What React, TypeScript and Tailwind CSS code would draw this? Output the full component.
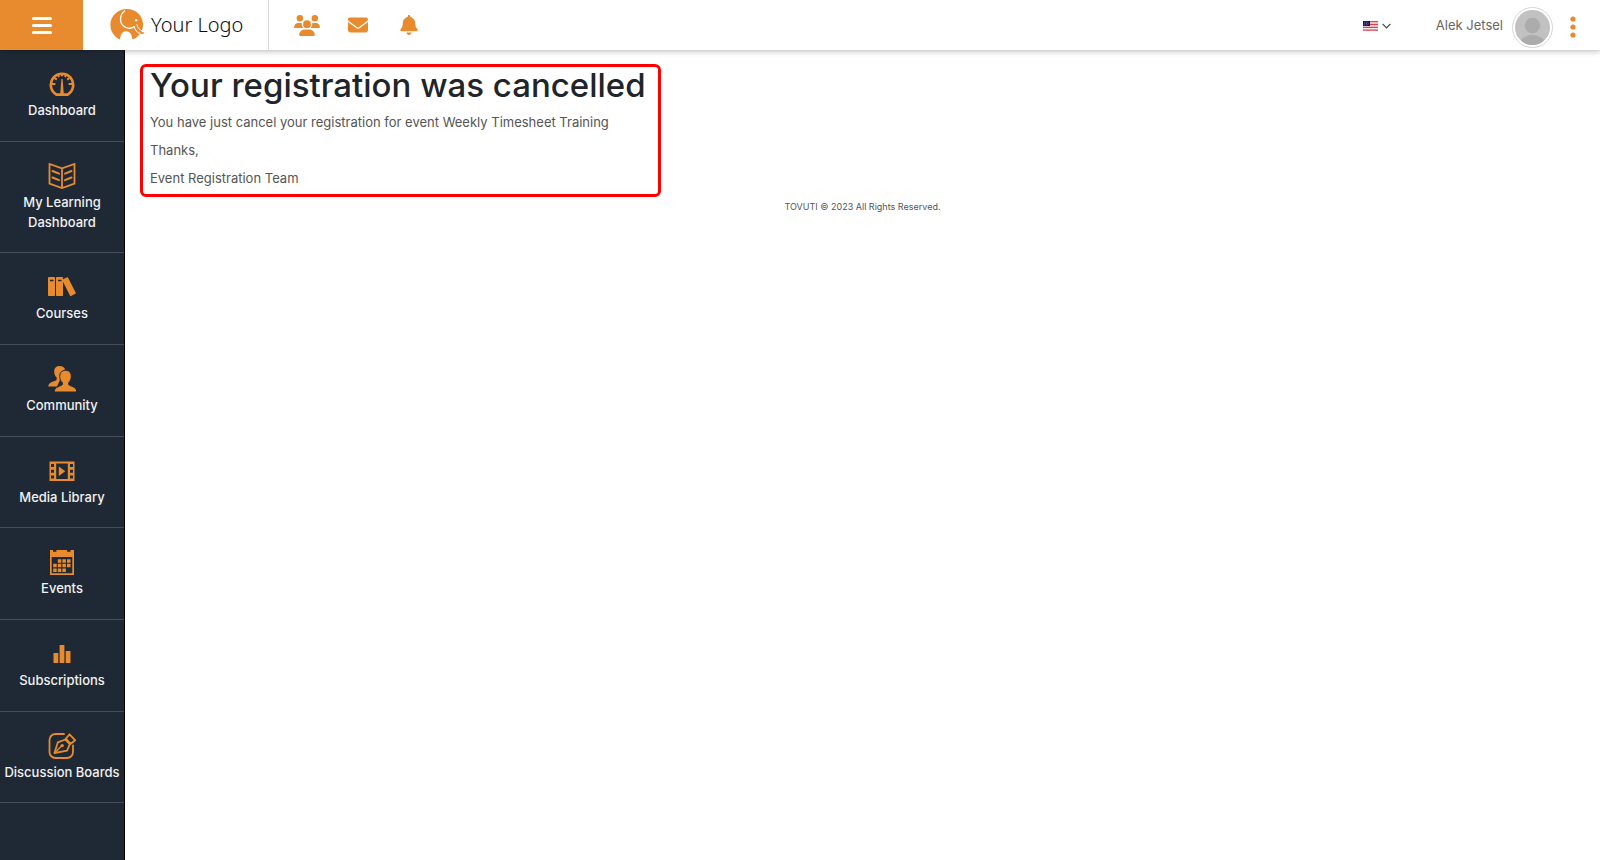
import React from 'react';
import { FaBell, FaEnvelope, FaUsers } from 'react-icons/fa6';

const DashboardIcon = () => (
  <svg viewBox="0 0 26 26" className="h-[26px] w-[26px]" fill="none" stroke="currentColor" aria-hidden="true">
    <path d="M7.400 23.600a11.200 11.200 0 1 1 11.200 0z" strokeWidth="2.600" strokeLinejoin="round" />
    <path
      d="M3 13h3.400M19.600 13H23M5.500 7l2.300 1.600M20.500 7l-2.300 1.600M9 3.600l1 2.400M17 3.600L16 6M13 2.500v2.800"
      strokeWidth="2"
    />
    <path d="M12.400 8h1.200l1.200 15h-3.600z" fill="currentColor" stroke="none" />
  </svg>
);

const BookIcon = () => (
  <svg viewBox="0 0 28 26" className="h-[26px] w-[28px]" fill="none" stroke="currentColor" aria-hidden="true">
    <path d="M14 5.4L1.5 1v19.6L14 25l12.500-4.400V1zM14 5.400V25" strokeWidth="1.800" />
    <path
      d="M4.500 8l6.500 2.600M4.500 14.500l6.500 2.600M23.500 8L17 10.600M23.500 14.500L17 17.100"
      strokeWidth="2"
      strokeLinecap="round"
    />
  </svg>
);

const CoursesIcon = () => (
  <svg viewBox="0 0 28 26" className="h-[26px] w-[28px]" fill="currentColor" aria-hidden="true">
    <rect x="0" y="3" width="7" height="19" rx="0.8" />
    <rect x="8" y="3" width="7" height="19" rx="0.8" />
    <rect x="18" y="3.500" width="6.400" height="18.500" rx="0.8" transform="rotate(-27 21 13)" />
    <path d="M2 6.500h3.500M10 6.500h3.500" stroke="#1f2935" strokeWidth="1.300" />
  </svg>
);

const CommunityIcon = () => (
  <svg viewBox="0 0 28 26" className="h-[26px] w-[28px]" fill="currentColor" aria-hidden="true">
    <path d="M11.500 0C8.200 0 6.200 2.200 6.200 5.500c0 2.600 1 4.800 2.500 6.100v2C8.500 15.500.3 15.500.3 20.500H9L17 3C16 1.100 14.200 0 11.500 0z" />
    <path
      d="M17.500 4.300c-3.600 0-5.800 2.400-5.800 6 0 2.700 1 5 2.600 6.300v1.900c-.5 1.700-8.100 1.700-8.100 7.500h22.600c0-5.800-7.600-5.800-8.100-7.500v-1.900c1.600-1.300 2.600-3.600 2.600-6.300 0-3.600-2.200-6-5.800-6z"
      stroke="#1f2935"
      strokeWidth="1"
    />
  </svg>
);

const MediaIcon = () => (
  <svg viewBox="0 0 26 26" className="h-[26px] w-[26px]" fill="currentColor" aria-hidden="true">
    <path
      fillRule="evenodd"
      d="M.5 3.500h25v19.500H.5zM2 6v3h3V6zm0 5.700v3h3v-3zm0 5.700v3h3v-3zM21 6v3h3V6zm0 5.700v3h3v-3zm0 5.700v3h3v-3zM7.200 5.500v15.500h11.600V5.500z"
    />
    <path d="M9.800 8.500v9.500l6.500-4.750z" />
  </svg>
);

const CalendarIcon = () => (
  <svg viewBox="0 0 26 26" className="h-[26px] w-[26px]" fill="currentColor" aria-hidden="true">
    <path fillRule="evenodd" d="M1 1h3v1.800h3.400V1h10.700v1.800h3.400V1H25v25H1zM2.700 8v16.300h20.600V8z" />
    <path d="M8.800 10.200h3.500v3.500H8.800zM13.400 10.200h3.500v3.500h-3.500zM18 10.200h3.500v3.500H18zM4.200 14.800h3.500v3.500H4.200zM8.800 14.800h3.500v3.500H8.800zM13.400 14.800h3.500v3.500h-3.500zM18 14.800h3.500v3.500H18zM4.200 19.400h3.500v3.500H4.200zM8.800 19.400h3.500v3.500H8.800zM13.400 19.400h3.500v3.500h-3.500z" />
  </svg>
);

const ChartIcon = () => (
  <svg viewBox="0 0 26 26" className="h-[26px] w-[26px]" fill="currentColor" aria-hidden="true">
    <rect x="4.500" y="12" width="4.800" height="10" rx="0.500" />
    <rect x="10.600" y="4" width="4.800" height="18" rx="0.500" />
    <rect x="16.700" y="10" width="4.800" height="12" rx="0.500" />
  </svg>
);

const PenIcon = () => (
  <svg
    viewBox="0 0 28 26"
    className="h-[26px] w-[28px]"
    fill="none"
    stroke="currentColor"
    strokeWidth="1.800"
    strokeLinejoin="round"
    strokeLinecap="round"
    aria-hidden="true"
  >
    <path d="M16 1H7.500A6 6 0 0 0 1.500 7v12a6 6 0 0 0 6 6H19a6 6 0 0 0 6-6v-6.500" />
    <path d="M6.500 20l3.300-10.700 7.400-2.800 4.600 4.600-2.700 6.500z" />
    <path d="M6.500 20l7-7" strokeWidth="1.400" />
    <circle cx="14.200" cy="12.600" r="1.700" fill="currentColor" stroke="none" />
    <path d="M17.800 5.600L21.600 1.300l5.600 6-4.500 3.500z" />
  </svg>
);

const ElephantLogo = () => (
  <svg viewBox="0 0 36 34" className="h-[34px] w-[36px]" aria-hidden="true">
    <path
      fill="#e78b2e"
      d="M16.800 1C7.600 1 .400 8.200.400 17c0 6.500 4 12.100 9.700 14.600.2-5.200 2.400-8.400 5.900-8.400 3.600 0 6 3 6.400 8.300 2.900-1 5.500-3 7.300-5.600 2.300.6 4-.1 5-1.700-1.400.3-2.600 0-3.200-.8 1.100-2.500 1.600-4.400 1.600-6.800C33.100 7.800 25.900 1 16.800 1z"
    />
    <path
      d="M14.500 3c-4.800 4-5.300 10.800-1.300 14.700 3.200 3 7.600 3.200 11 .9"
      fill="none"
      stroke="#fff"
      strokeWidth="1.300"
      strokeLinecap="round"
    />
    <path
      d="M24.200 18.600c.8 3.700 2.800 6.200 6 6.800M27 16.800c.7 3.100 2.400 5.200 5 6"
      fill="none"
      stroke="#fff"
      strokeWidth="1"
      strokeLinecap="round"
    />
    <circle cx="26.200" cy="12.300" r="1.200" fill="#fff" />
  </svg>
);

const Flag = () => (
  <svg viewBox="0 0 15 10" className="h-[10px] w-[15px]" aria-hidden="true">
    <rect width="15" height="10" fill="#f3e9ec" />
    <path d="M0 .7h15M0 3.500h15M0 6.300h15M0 9.200h15" stroke="#d8434f" strokeWidth="1.300" />
    <rect width="7" height="5" fill="#14145f" />
    <path d="M1 1.200h5M1.500 2.500h4M1 3.800h5" stroke="#a9a9cf" strokeWidth="0.600" strokeDasharray="0.800 0.900" />
  </svg>
);

const Avatar = () => (
  <svg viewBox="0 0 35 35" className="h-[35px] w-[35px] rounded-full" aria-hidden="true">
    <rect width="35" height="35" fill="#c1c1c1" />
    <circle cx="17.500" cy="15.500" r="7.700" fill="#acacac" />
    <ellipse cx="17.500" cy="34" rx="13" ry="9" fill="#acacac" />
  </svg>
);

const navItems = [
  { label: 'Dashboard', icon: DashboardIcon },
  { label: 'My Learning Dashboard', icon: BookIcon },
  { label: 'Courses', icon: CoursesIcon },
  { label: 'Community', icon: CommunityIcon },
  { label: 'Media Library', icon: MediaIcon },
  { label: 'Events', icon: CalendarIcon },
  { label: 'Subscriptions', icon: ChartIcon },
  { label: 'Discussion Boards', icon: PenIcon },
];

const Header: React.FC = () => (
  <header className="relative z-10 flex h-[50px] items-stretch bg-white shadow-[0_1px_6px_rgba(0,0,0,0.3)]">
    <button aria-label="Toggle menu" className="flex w-[83px] flex-col items-center justify-center gap-1 bg-[#e78b2e]">
      <span className="h-[3px] w-5 rounded-xs bg-white" />
      <span className="h-[3px] w-5 rounded-xs bg-white" />
      <span className="h-[3px] w-5 rounded-xs bg-white" />
    </button>

    <a href="#" className="flex w-[186px] items-center gap-[5px] border-r border-[#d9d9d9] pl-[27px]">
      <ElephantLogo />
      <span className="font-['Noto_Sans',sans-serif] text-[20px] font-light text-[#060d18]">Your Logo</span>
    </a>

    <nav aria-label="Quick links" className="flex items-center gap-7 pl-[25px] text-[#e78b2e]">
      <a href="#" aria-label="People">
        <FaUsers className="h-[21px] w-[26px]" />
      </a>
      <a href="#" aria-label="Messages">
        <FaEnvelope className="h-5 w-5" />
      </a>
      <a href="#" aria-label="Notifications" className="pl-1">
        <FaBell className="h-5 w-[18px]" />
      </a>
    </nav>

    <div className="ml-auto flex items-center pr-6">
      <button aria-label="Language" className="mt-px mr-[45px] flex items-center gap-1">
        <Flag />
        <svg viewBox="0 0 9 6" className="h-[6px] w-[9px]" fill="none" stroke="#444" strokeWidth="1.200" aria-hidden="true">
          <path d="M.6.800l3.900 4 3.900-4" />
        </svg>
      </button>
      <span className="mt-px mr-[9px] text-[13px] text-[#666]">Alek Jetsel</span>
      <button aria-label="Profile" className="mt-1 rounded-full border border-[#d6d6d6] bg-white p-[2px]">
        <Avatar />
      </button>
      <button aria-label="More options" className="mt-1 ml-[17px] text-[#e78b2e]">
        <svg viewBox="0 0 6 22" className="h-[22px] w-[6px]" fill="currentColor" aria-hidden="true">
          <circle cx="3" cy="3" r="2.600" />
          <circle cx="3" cy="11" r="2.600" />
          <circle cx="3" cy="19" r="2.600" />
        </svg>
      </button>
    </div>
  </header>
);

const Sidebar: React.FC = () => (
  <aside className="w-[125px] shrink-0 border-r border-black bg-[#1f2935]">
    <nav aria-label="Main">
      <ul>
        {navItems.map(({ label, icon: Icon }) => (
          <li key={label} className="border-b border-[#474e57] pb-[21px] nth-[3n+2]:pb-5">
            <a href="#" className="flex flex-col items-center gap-[3px] pt-[21px] text-[#e78b2e]">
              <Icon />
              <span className="px-1 text-center text-[13px] leading-5 font-medium text-[#f1f1f1]">{label}</span>
            </a>
          </li>
        ))}
      </ul>
    </nav>
  </aside>
);

export default function App() {
  return (
    <div className="flex min-h-screen flex-col bg-white font-['Inter',sans-serif]">
      <Header />
      <div className="flex flex-1">
        <Sidebar />
        <div className="flex-1 px-[15px] pt-[14px]">
          <main className="max-w-[521px] rounded-md border-3 border-[#fe0000] pb-[6px] pl-[7px] text-[13px] leading-5 text-[#555]">
            <h1 className="mb-[9px] text-[33px] leading-9 font-medium text-[#212529]">Your registration was cancelled</h1>
            <p className="mb-2">You have just cancel your registration for event Weekly Timesheet Training</p>
            <p className="mb-2">Thanks,</p>
            <p>Event Registration Team</p>
          </main>
          <footer className="mt-1 text-center text-[9px] leading-3 text-[#555]">TOVUTI © 2023 All Rights Reserved.</footer>
        </div>
      </div>
    </div>
  );
}
